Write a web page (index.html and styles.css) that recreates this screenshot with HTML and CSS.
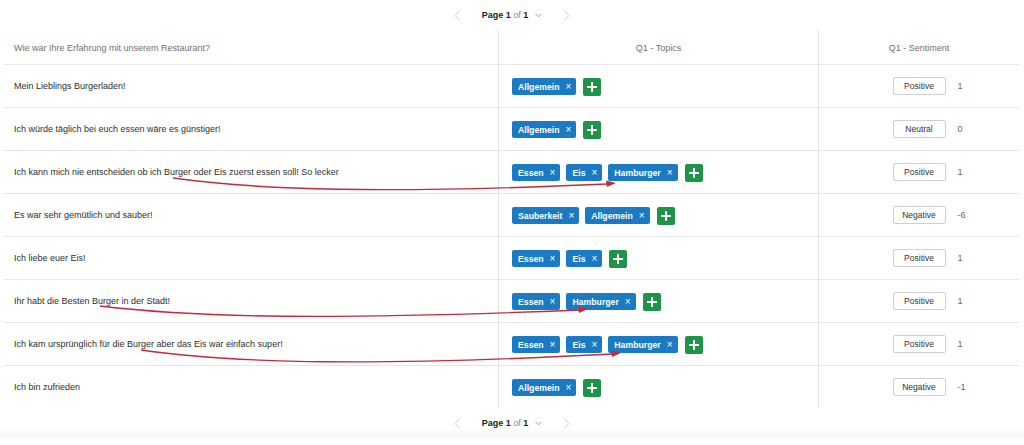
FILE: index.html
```html
<!DOCTYPE html>
<html lang="de">
<head>
    <meta charset="UTF-8">
    <title>Q1 - Topics</title>
    <link rel="stylesheet" href="styles.css">
</head>
<body>
    <div class="pager">
        <svg class="chev" width="7" height="11" viewBox="0 0 7 11"><path d="M6 0.5 L1 5.5 L6 10.5" fill="none" stroke="#c9c9c9" stroke-width="1"/></svg>
        <span class="pager-label"><b>Page 1</b> of <b>1</b></span>
        <svg class="down" width="7" height="5" viewBox="0 0 7 5"><path d="M0.5 0.8 L3.5 3.8 L6.5 0.8" fill="none" stroke="#999" stroke-width="1"/></svg>
        <svg class="chev" width="7" height="11" viewBox="0 0 7 11"><path d="M1 0.5 L6 5.5 L1 10.5" fill="none" stroke="#c9c9c9" stroke-width="1"/></svg>
    </div>

    <div class="grid">
        <div class="cell head text">Wie war Ihre Erfahrung mit unserem Restaurant?</div>
        <div class="cell head mid">Q1 - Topics</div>
        <div class="cell head">Q1 - Sentiment</div>

        <div class="cell text">Mein Lieblings Burgerladen!</div>
        <div class="cell mid tags"><span class="tag">Allgemein</span><span class="add"></span></div>
        <div class="cell senti"><span class="btn">Positive</span><span class="score">1</span></div>

        <div class="cell text">Ich würde täglich bei euch essen wäre es günstiger!</div>
        <div class="cell mid tags"><span class="tag">Allgemein</span><span class="add"></span></div>
        <div class="cell senti"><span class="btn">Neutral</span><span class="score">0</span></div>

        <div class="cell text">Ich kann mich nie entscheiden ob ich Burger oder Eis zuerst essen soll! So lecker</div>
        <div class="cell mid tags"><span class="tag">Essen</span><span class="tag">Eis</span><span class="tag">Hamburger</span><span class="add"></span></div>
        <div class="cell senti"><span class="btn">Positive</span><span class="score">1</span></div>

        <div class="cell text">Es war sehr gemütlich und sauber!</div>
        <div class="cell mid tags"><span class="tag">Sauberkeit</span><span class="tag">Allgemein</span><span class="add"></span></div>
        <div class="cell senti"><span class="btn">Negative</span><span class="score">-6</span></div>

        <div class="cell text">Ich liebe euer Eis!</div>
        <div class="cell mid tags"><span class="tag">Essen</span><span class="tag">Eis</span><span class="add"></span></div>
        <div class="cell senti"><span class="btn">Positive</span><span class="score">1</span></div>

        <div class="cell text">Ihr habt die Besten Burger in der Stadt!</div>
        <div class="cell mid tags"><span class="tag">Essen</span><span class="tag">Hamburger</span><span class="add"></span></div>
        <div class="cell senti"><span class="btn">Positive</span><span class="score">1</span></div>

        <div class="cell text">Ich kam ursprünglich für die Burger aber das Eis war einfach super!</div>
        <div class="cell mid tags"><span class="tag">Essen</span><span class="tag">Eis</span><span class="tag">Hamburger</span><span class="add"></span></div>
        <div class="cell senti"><span class="btn">Positive</span><span class="score">1</span></div>

        <div class="cell text last">Ich bin zufrieden</div>
        <div class="cell mid tags last"><span class="tag">Allgemein</span><span class="add"></span></div>
        <div class="cell senti last"><span class="btn">Negative</span><span class="score">-1</span></div>
    </div>

    <div class="pager bottom">
        <svg class="chev" width="7" height="11" viewBox="0 0 7 11"><path d="M6 0.5 L1 5.5 L6 10.5" fill="none" stroke="#c9c9c9" stroke-width="1"/></svg>
        <span class="pager-label"><b>Page 1</b> of <b>1</b></span>
        <svg class="down" width="7" height="5" viewBox="0 0 7 5"><path d="M0.5 0.8 L3.5 3.8 L6.5 0.8" fill="none" stroke="#999" stroke-width="1"/></svg>
        <svg class="chev" width="7" height="11" viewBox="0 0 7 11"><path d="M1 0.5 L6 5.5 L1 10.5" fill="none" stroke="#c9c9c9" stroke-width="1"/></svg>
    </div>

    <!-- red annotation arrows drawn over the table -->
    <svg class="arrows" width="1024" height="445" viewBox="0 0 1024 445">
        <path class="line" d="M173 178 C 260 190, 380 194, 608 184"/>
        <path class="tip" d="M616 183 L606 180.5 L607 187 Z"/>
        <path class="line" d="M100 306 C 200 318, 330 320, 580 310"/>
        <path class="tip" d="M588 309 L578 306.5 L579 313 Z"/>
        <path class="line" d="M141 350 C 240 364, 380 366, 613 354"/>
        <path class="tip" d="M621 353 L611 350.5 L612 357 Z"/>
    </svg>
</body>
</html>
```

FILE: styles.css
```css
body {
    margin: 0;
    font-family: "Liberation Sans", Arial, sans-serif;
    font-size: 9px;
    color: #2e2e2e;
    background: #fff;
    position: relative;
    width: 1024px;
    height: 445px;
    overflow: hidden;
}

.pager {
    height: 30px;
    display: flex;
    align-items: center;
    justify-content: center;
}

.pager .chev {
    margin: 0 21px;
}

.pager-label {
    color: #888;
    font-size: 9px;
}

.pager-label b {
    color: #222;
}

.pager .down {
    margin-left: 7px;
}

.pager.bottom {
    background: linear-gradient(to bottom, #fff 60%, #f7f7f7);
}

.grid {
    display: grid;
    grid-template-columns: 494px 321px 200px;
    grid-template-rows: 35px repeat(7, 43px) 42px;
    margin-left: 4px;
}

.cell {
    display: flex;
    align-items: center;
    border-bottom: 1px solid #e6e6e6;
    box-sizing: border-box;
}

.cell.last {
    border-bottom: none;
}

.head {
    justify-content: center;
    color: #707070;
    padding-top: 1px;
}

.head.text {
    justify-content: flex-start;
}

.text {
    padding-left: 10px;
}

.mid {
    border-left: 1px solid #e2e2e2;
    border-right: 1px solid #e2e2e2;
}

.tags {
    padding-left: 13px;
    gap: 6px;
    padding-top: 1px;
}

.tag {
    background: #1a7ac4;
    color: #fff;
    font-weight: bold;
    height: 17px;
    line-height: 17px;
    padding: 0 5px 0 6px;
    border-radius: 2px;
    font-size: 8.7px;
}

.tag::after {
    content: "\00d7";
    font-weight: normal;
    margin-left: 6px;
    font-size: 10px;
}

.add {
    width: 18px;
    height: 18px;
    margin-left: 1px;
    border-radius: 2px;
    background: #1e9448;
    position: relative;
}

.add::before,
.add::after {
    content: "";
    position: absolute;
    background: #fff;
    left: 50%;
    top: 50%;
    transform: translate(-50%, -50%);
}

.add::before {
    width: 10px;
    height: 2px;
}

.add::after {
    width: 2px;
    height: 10px;
}

.senti {
    display: grid;
    grid-template-columns: 1fr auto 1fr;
    align-items: center;
}

.btn {
    grid-column: 2;
    width: 53px;
    height: 18px;
    box-sizing: border-box;
    border: 1px solid #cfcfcf;
    border-radius: 2px;
    text-align: center;
    line-height: 16px;
    color: #333;
    font-size: 8.5px;
}

.score {
    grid-column: 3;
    margin-left: 12px;
    color: #666;
}

.arrows {
    position: absolute;
    left: 0;
    top: 0;
    pointer-events: none;
}

.arrows .line {
    fill: none;
    stroke: #c8283a;
    stroke-width: 1.4;
}

.arrows .tip {
    fill: #c8283a;
}
```
